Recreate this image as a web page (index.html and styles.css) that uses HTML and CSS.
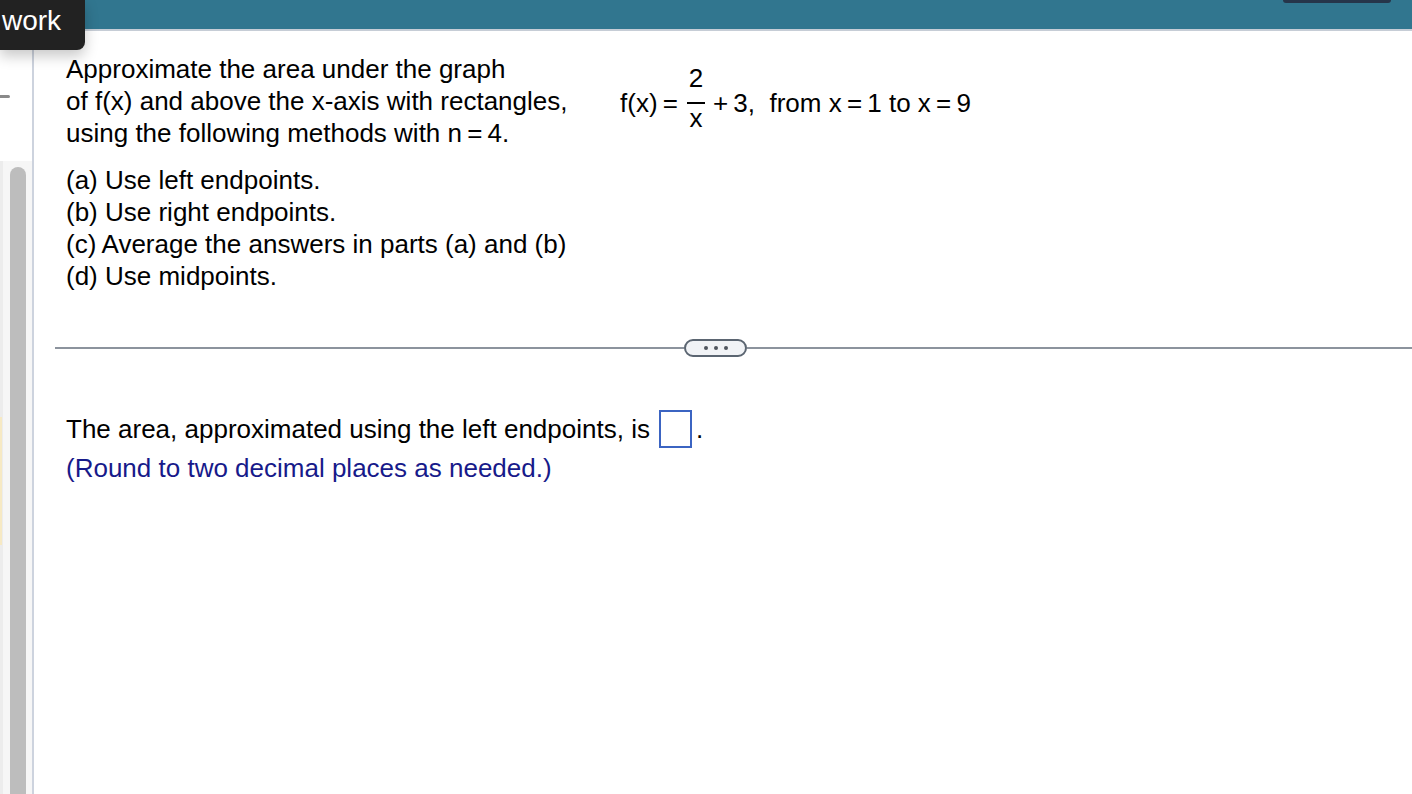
FILE: index.html
```html
<!DOCTYPE html>
<html>
<head>
<meta charset="utf-8">
<link rel="stylesheet" href="styles.css">
</head>
<body>
<div class="header">
  <div class="header-btn"></div>
</div>
<div class="tooltip">work</div>
<div class="main">
  <aside class="sidebar">
    <div class="side-top"><span class="dash"></span></div>
    <div class="track">
      <div class="track-edge"><span class="yellow"></span></div>
      <div class="track-gap"></div>
      <div class="thumb"></div>
      <div class="track-right"></div>
    </div>
  </aside>
  <section class="content">
    <div class="problem">
      <div class="prompt">
        <p class="intro">Approximate the area under the graph<br>of f(x) and above the x-axis with rectangles,<br>using the following methods with n&#8201;=&#8201;4.</p>
        <p class="parts">(a) Use left endpoints.<br>(b) Use right endpoints.<br>(c)&#8201;Average the answers in parts (a) and (b)<br>(d) Use midpoints.</p>
      </div>
      <div class="formula">
        <span class="fx">f(x)&#8201;=</span>
        <span class="frac"><span class="num">2</span><span class="bar"></span><span class="den">x</span></span>
        <span class="rest">+&#8201;3,&nbsp;&nbsp;from x&#8201;=&#8201;1 to x&#8201;=&#8201;9</span>
      </div>
    </div>
    <div class="divider">
      <span class="rule rule-left"></span>
      <span class="pill"><i></i><i></i><i></i></span>
      <span class="rule rule-right"></span>
    </div>
    <div class="answer">
      <span>The area, approximated using the left endpoints, is</span>
      <span class="box"></span>
      <span>.</span>
    </div>
    <p class="hint">(Round to two decimal places as needed.)</p>
  </section>
</div>
</body>
</html>
```

FILE: styles.css
```css
* { box-sizing: border-box; }
html, body {
  margin: 0;
  padding: 0;
  width: 1412px;
  height: 794px;
  overflow: hidden;
  background: #ffffff;
  font-family: "Liberation Sans", Arial, sans-serif;
  color: #000;
}
.header {
  position: relative;
  height: 31px;
  background: #31768f;
  border-bottom: 2px solid #c6cdd6;
}
.header-btn {
  position: absolute;
  left: 1283px;
  top: 0;
  width: 108px;
  height: 3px;
  background: #26354a;
  border-radius: 0 0 8px 8px;
}
.tooltip {
  position: absolute;
  left: 0;
  top: 0;
  width: 85px;
  height: 50px;
  background: #222222;
  color: #ffffff;
  font-size: 28px;
  line-height: 42px;
  padding-left: 2px;
  border-radius: 0 0 8px 0;
  box-shadow: 0 6px 14px rgba(0,0,0,0.22);
  z-index: 5;
}
.main {
  display: flex;
  height: 763px;
}
.sidebar {
  width: 34px;
  border-right: 2px solid #cdd3de;
  display: flex;
  flex-direction: column;
}
.side-top {
  height: 130px;
  position: relative;
  padding-top: 64px;
}
.dash {
  display: block;
  width: 10px;
  height: 3px;
  background: #8a8a8a;
  border-radius: 0 2px 2px 0;
}
.track {
  flex: 1;
  display: flex;
  background: #f6f6f6;
}
.track-edge {
  width: 3px;
  background: #ececec;
  padding-top: 256px;
}
.yellow {
  display: block;
  width: 2px;
  height: 128px;
  background: #f6e9c4;
}
.track-gap { width: 7px; }
.thumb {
  width: 16px;
  margin-top: 6px;
  background: #bdbdbd;
  border-radius: 8px 8px 0 0;
}
.track-right { flex: 1; }
.content {
  flex: 1;
  padding: 22px 0 0 32px;
  font-size: 26px;
  line-height: 32px;
}
p { margin: 0; }
.problem {
  display: flex;
}
.prompt {
  width: 554px;
}
.parts {
  margin-top: 15px;
}
.formula {
  display: flex;
  align-items: flex-start;
  padding-top: 12px;
  white-space: pre;
  line-height: 26px;
}
.fx, .rest {
  margin-top: 25px;
}
.frac {
  display: flex;
  flex-direction: column;
  align-items: center;
  margin: 0 8px 0 9px;
}
.bar {
  width: 18px;
  height: 2px;
  background: #000;
  margin-top: 11px;
}
.den { margin-top: 1px; }
.divider {
  display: flex;
  align-items: center;
  margin: 47px 0 0 -11px;
  height: 18px;
}
.rule {
  height: 2px;
  background: #8c939d;
}
.rule-left { width: 629px; }
.rule-right { flex: 1; }
.pill {
  width: 63px;
  height: 18px;
  border: 2px solid #5b6571;
  border-radius: 9px;
  background: #f1f3f6;
  display: flex;
  align-items: center;
  justify-content: center;
  gap: 6px;
}
.pill i {
  width: 4px;
  height: 4px;
  border-radius: 50%;
  background: #50565e;
}
.answer {
  display: flex;
  align-items: center;
  margin-top: 53px;
  height: 38px;
}
.box {
  width: 33px;
  height: 38px;
  border: 2px solid #3b64c2;
  margin: 0 4px 0 9px;
}
.hint {
  margin-top: 4px;
  color: #171a8a;
}
```
